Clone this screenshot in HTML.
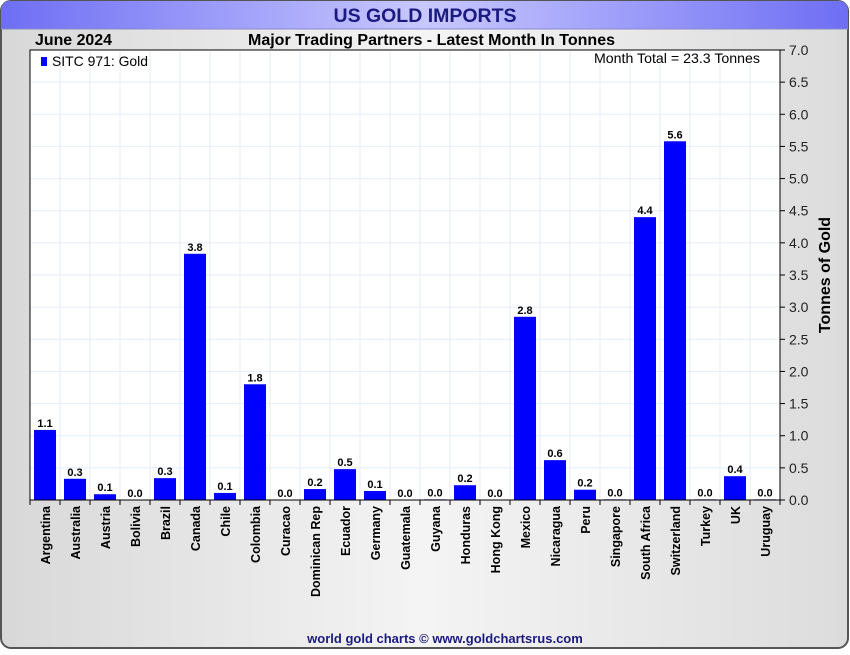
<!DOCTYPE html>
<html><head><style>
body{margin:0;background:#fff;}
svg text{font-family:"Liberation Sans",Arial,sans-serif;}
</style></head><body>
<svg width="850" height="650" viewBox="0 0 850 650" xmlns="http://www.w3.org/2000/svg">
<defs>
<linearGradient id="hd" x1="0" x2="1" y1="0" y2="0">
<stop offset="0" stop-color="#6e6ef4"/><stop offset="0.5" stop-color="#c8c8ff"/><stop offset="1" stop-color="#6e6ef4"/>
</linearGradient>
<linearGradient id="bg" x1="0" x2="1" y1="0" y2="0">
<stop offset="0" stop-color="#d8d8d8"/><stop offset="0.5" stop-color="#f4f4f4"/><stop offset="1" stop-color="#dcdcdc"/>
</linearGradient>
</defs>
<rect x="1" y="1" width="847" height="647" rx="10" fill="url(#bg)" stroke="#555" stroke-width="2"/>
<path d="M1 29 V11 Q1 1 11 1 H838 Q848 1 848 11 V29 Z" fill="url(#hd)"/>
<line x1="1" y1="29" x2="848" y2="29" stroke="#8888cc" stroke-width="1"/>
<text x="425" y="22" text-anchor="middle" font-size="19" font-weight="bold" fill="#1a1a80" textLength="183" lengthAdjust="spacingAndGlyphs">US GOLD IMPORTS</text>
<text x="35" y="45" font-size="16" font-weight="bold" fill="#000" textLength="77" lengthAdjust="spacingAndGlyphs">June 2024</text>
<text x="248" y="45" font-size="16" font-weight="bold" fill="#000" textLength="367" lengthAdjust="spacingAndGlyphs">Major Trading Partners - Latest Month In Tonnes</text>
<rect x="30" y="50" width="750" height="450" fill="#fff" stroke="#000" stroke-width="1"/>
<g stroke="#e4eef8" stroke-width="1" id="grid"></g>
<g id="bars"></g>
<line x1="780" y1="50" x2="780" y2="500" stroke="#000"/>
<line x1="30" y1="500" x2="780" y2="500" stroke="#000"/>
<g id="yax" font-size="14" fill="#222"></g>
<g id="xl" font-size="12.5" font-weight="bold" fill="#000"></g>
<rect x="41" y="57" width="6" height="9" fill="#0000ff"/>
<text x="52" y="66" font-size="14" fill="#000" textLength="96" lengthAdjust="spacingAndGlyphs">SITC 971: Gold</text>
<text x="594" y="63" font-size="14" fill="#000" textLength="166" lengthAdjust="spacingAndGlyphs">Month Total = 23.3 Tonnes</text>
<text transform="translate(830,275) rotate(-90)" text-anchor="middle" font-size="16" font-weight="bold" fill="#000">Tonnes of Gold</text>
<text x="445" y="643" text-anchor="middle" font-size="13" font-weight="bold" fill="#1a1a80">world gold charts © www.goldchartsrus.com</text>
</svg>
<script>
var ns="http://www.w3.org/2000/svg";
function el(p,t,a,tx){var e=document.createElementNS(ns,t);for(var k in a)e.setAttribute(k,a[k]);if(tx!=null)e.textContent=tx;document.getElementById(p).appendChild(e);}
var d=[["Argentina",1.09,"1.1"],["Australia",0.33,"0.3"],["Austria",0.09,"0.1"],["Bolivia",0,"0.0"],["Brazil",0.34,"0.3"],["Canada",3.83,"3.8"],["Chile",0.11,"0.1"],["Colombia",1.8,"1.8"],["Curacao",0,"0.0"],["Dominican Rep",0.17,"0.2"],["Ecuador",0.48,"0.5"],["Germany",0.14,"0.1"],["Guatemala",0,"0.0"],["Guyana",0.01,"0.0"],["Honduras",0.23,"0.2"],["Hong Kong",0,"0.0"],["Mexico",2.85,"2.8"],["Nicaragua",0.62,"0.6"],["Peru",0.16,"0.2"],["Singapore",0.01,"0.0"],["South Africa",4.4,"4.4"],["Switzerland",5.58,"5.6"],["Turkey",0.01,"0.0"],["UK",0.37,"0.4"],["Uruguay",0.01,"0.0"]];
var s=450/7;
for(var i=1;i<25;i++)el("grid","line",{x1:30+30*i,y1:51,x2:30+30*i,y2:499});
for(var j=1;j<14;j++){var y=500-j*0.5*s;el("grid","line",{x1:31,y1:y,x2:779,y2:y});}
for(var j=0;j<=14;j++){var y=500-j*0.5*s;el("yax","line",{x1:780,y1:y,x2:785,y2:y,stroke:"#000"});el("yax","text",{x:789,y:y+5},(j*0.5).toFixed(1));}
d.forEach(function(r,i){var cx=45+30*i,h=r[1]*s;
el("bars","rect",{x:cx-11,y:500-h,width:22,height:h,fill:"#0000ff"});
el("bars","text",{x:cx,y:500-h-3,"text-anchor":"middle","font-size":"11","font-weight":"bold",fill:"#000"},r[2]);
el("xl","line",{x1:30+30*i,y1:500,x2:30+30*i,y2:505,stroke:"#000"});
el("xl","text",{transform:"translate("+(cx+5)+",506) rotate(-90)","text-anchor":"end"},r[0]);});
el("xl","line",{x1:780,y1:500,x2:780,y2:505,stroke:"#000"});
</script>
</body></html>
